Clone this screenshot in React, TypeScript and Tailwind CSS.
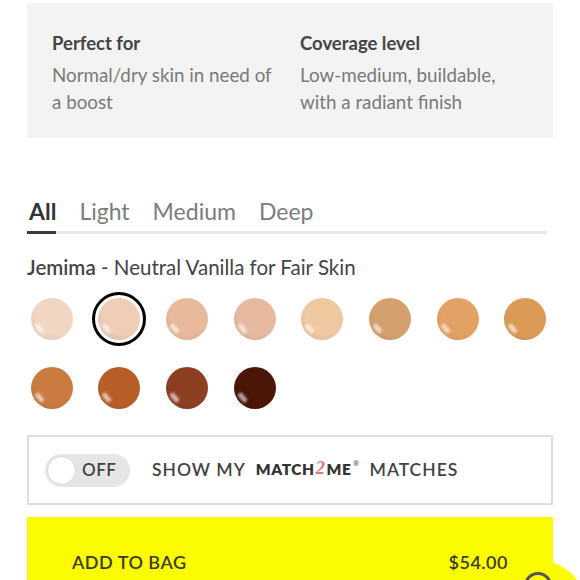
import React from "react";

const font = { fontFamily: "Lato, 'Open Sans', sans-serif" };

const shades = [
  { name: "Jemima", color: "#f2d6c4" },
  { name: "Vanilla", color: "#efcdb6" },
  { name: "Light", color: "#e9b99c" },
  { name: "Light 2", color: "#e7baa0" },
  { name: "Light 3", color: "#f0c8a0" },
  { name: "Medium", color: "#d5a06f" },
  { name: "Medium 2", color: "#e3a165" },
  { name: "Medium 3", color: "#dc9a57" },
  { name: "Tan", color: "#ca7b3f" },
  { name: "Tan 2", color: "#b85f29" },
  { name: "Deep", color: "#8d3f22" },
  { name: "Deep 2", color: "#4b1507" },
];

function Swatch({ color, selected }: { color: string; selected?: boolean }) {
  return (
    <div className="flex h-[69px] items-center justify-center">
      <div
        className={`flex h-[54px] w-[54px] items-center justify-center rounded-full ${
          selected ? "border-[3px] border-black" : ""
        }`}
      >
        <div
          className="relative h-[42px] w-[42px] overflow-hidden rounded-full"
          style={{
            background: `radial-gradient(circle at 60% 35%, ${color} 55%, color-mix(in srgb, ${color}, #000 10%) 100%)`,
          }}
        >
          <div className="absolute left-[6px] top-[25px] h-[11px] w-[5px] rotate-[-40deg] rounded-full bg-white/60 blur-[1px]" />
        </div>
      </div>
    </div>
  );
}

export default function App() {
  const tabs = ["All", "Light", "Medium", "Deep"];

  return (
    <div className="relative h-[580px] w-[580px] overflow-hidden bg-white" style={font}>
      <div className="ml-[27px] w-[526px] pt-[3px]">
        {/* info box */}
        <div className="grid h-[135px] grid-cols-[248px_1fr] bg-[#f3f3f3] pl-[25px] pt-[27px]">
          <div>
            <h3 className="text-[18.5px] font-bold leading-[26px] text-[#444]">Perfect for</h3>
            <p className="mt-[5px] text-[18.8px] leading-[27px] text-[#7a7a7a]">
              Normal/dry skin in need of
              <br />a boost
            </p>
          </div>
          <div>
            <h3 className="text-[18.5px] font-bold leading-[26px] text-[#444]">Coverage level</h3>
            <p className="mt-[5px] text-[18.8px] leading-[27px] text-[#7a7a7a]">
              Low-medium, buildable,
              <br />
              with a radiant finish
            </p>
          </div>
        </div>

        {/* tabs */}
        <div className="mt-[59px] flex w-[520px] gap-[23px] border-b-[3px] border-[#e8e8e8]">
          {tabs.map((t, i) => (
            <div
              key={t}
              className={`-mb-[3px] pb-[6px] text-[23px] leading-[28px] ${
                i === 0
                  ? "border-b-[3px] border-[#3a3a3a] pl-[2px] font-bold text-[#333]"
                  : "border-b-[3px] border-transparent text-[#7c7c7c]"
              }`}
            >
              {t}
            </div>
          ))}
        </div>

        {/* shade name */}
        <p className="mt-[20px] text-[20.5px] leading-[26px] text-[#444]">
          <span className="font-semibold">Jemima</span> - Neutral Vanilla for Fair Skin
        </p>

        {/* swatches */}
        <div className="-ml-[9px] mt-[4px] grid w-[541px] grid-cols-8">
          {shades.map((s, i) => (
            <Swatch key={s.name} color={s.color} selected={i === 1} />
          ))}
        </div>

        {/* match2me toggle */}
        <div className="mt-[13px] flex h-[70px] items-center border-2 border-[#dedede] pl-[16px]">
          <div className="flex h-[33px] w-[85px] items-center rounded-full bg-[#e6e6e6] pl-[2px]">
            <div className="h-[29px] w-[29px] rounded-full border border-[#d8d8d8] bg-white" />
            <span className="ml-[6px] text-[17px] font-semibold tracking-[0.5px] text-[#444]">OFF</span>
          </div>
          <div className="ml-[22px] flex items-center text-[17.5px] font-semibold tracking-[1px] text-[#444]">
            <span>SHOW MY</span>
            <span className="ml-[10px] flex items-start text-[15.5px] font-extrabold tracking-[0.5px] text-[#333]">
              MATCH
              <span className="mx-[1px] font-['Liberation_Serif',serif] text-[19px] italic leading-[20px] text-[#e2778a]">
                2
              </span>
              ME
              <span className="ml-[2px] text-[7px] leading-[10px] text-[#888]">®</span>
            </span>
            <span className="ml-[10px]">MATCHES</span>
          </div>
        </div>

        {/* add to bag */}
        <div className="mt-[12px] flex h-[80px] items-start justify-between bg-[#fcfc00] pl-[45px] pr-[45px] pt-[32px] text-[18px] font-semibold tracking-[0.5px] text-[#3a3a2a]">
          <span>ADD TO BAG</span>
          <span>$54.00</span>
        </div>
      </div>

      {/* chat bubble */}
      <div className="absolute left-[490px] top-[560px] flex h-[96px] w-[96px] justify-center rounded-full bg-[#fcfc00] pt-[12px]">
        <div className="h-[28px] w-[28px] rounded-full border-[3px] border-[#555] bg-[#fcfc00]" />
      </div>
    </div>
  );
}
